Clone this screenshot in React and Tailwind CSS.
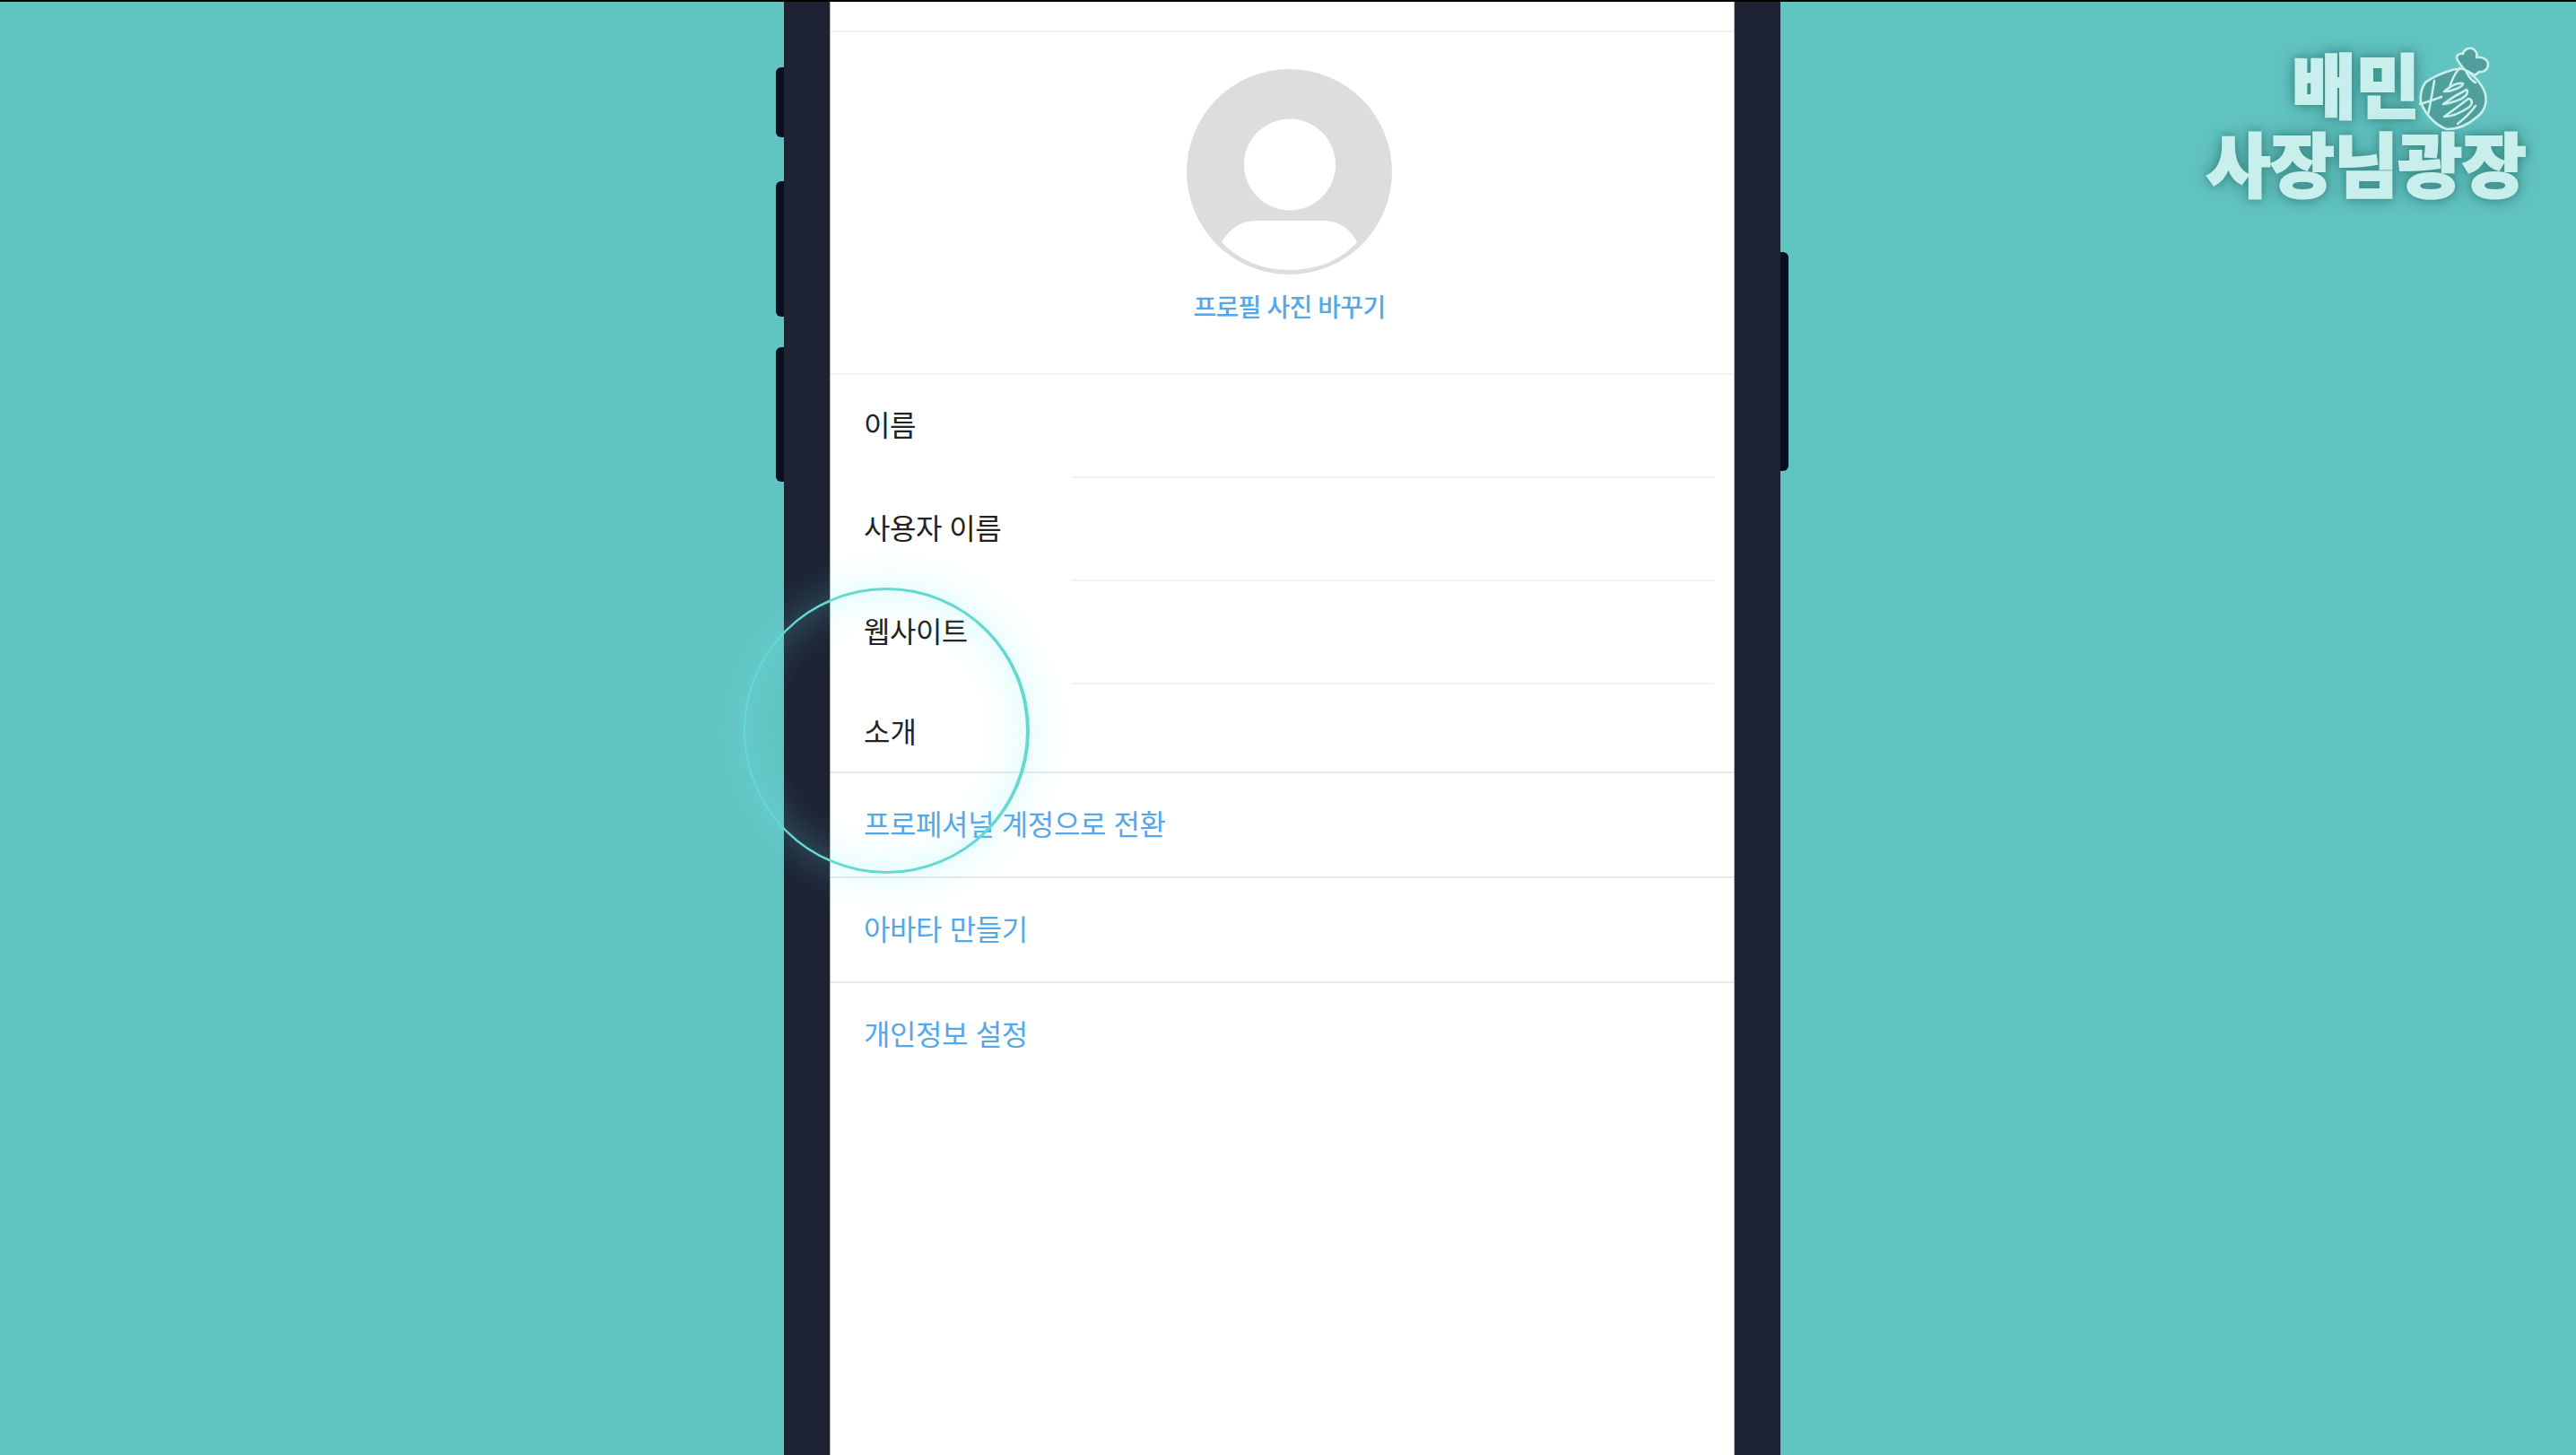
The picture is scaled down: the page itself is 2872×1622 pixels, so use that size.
import React from 'react';

const KR = "font-['Inter','Noto_Sans_CJK_KR',sans-serif]";

// scribbled pouch next to the logo text
const Pouch = () => (
  <svg viewBox="0 0 100 110" className="w-[100px] h-[110px]" fill="none" stroke="#c8efec" strokeWidth="2.6" strokeLinecap="round" strokeLinejoin="round">
    <path d="M14 52 C22 46 34 41 44 38 C50 37 54 36 57 37 C66 42 76 52 80 62 C84 74 80 84 72 90 C62 99 50 104 38 104 C26 100 14 88 9 74 C8 66 10 58 14 52 Z" fill="#4f9f9c" />
    <path d="M57 37 C55 34 52 31 50 27 C47 22 52 19 56 20 C57 15 63 12 68 15 C72 18 72 21 71 24 C77 23 84 26 84 32 C84 38 78 41 74 40 C72 42 70 43 69 44 C66 42 62 40 57 37 Z" fill="#4f9f9c" />
    <path d="M52 36 C47 42 43 50 41 58 M60 41 C63 46 66 50 70 52" />
    <path d="M24 50 C22 62 20 75 17 88 M8 76 C16 74 24 71 32 68" />
    <path d="M35 62 C42 56 50 52 56 53 C56 57 44 62 35 62 Z" />
    <path d="M34 76 C42 70 52 64 60 60 C64 64 56 70 50 72 C44 74 38 76 34 76 Z" />
    <path d="M35 90 C44 84 54 76 62 70 C66 70 68 76 62 80 C56 84 46 90 35 90 Z" />
    <path d="M50 98 C58 92 64 86 70 78" />
  </svg>
);

const Logo = () => (
  <div className="relative flex flex-col items-center w-[360px] ml-[464px] mt-[46px] text-[#c8efec] font-['Noto_Sans_CJK_KR',sans-serif] font-black text-[78px] leading-[88px] tracking-[-0.5px] [-webkit-text-stroke:2px_#c8efec] [text-shadow:0_0_24px_#3f8f8b,0_0_12px_#3f8f8b,0_0_6px_#3f8f8b]">
    <div className="self-start ml-[97px]">배민</div>
    <div>사장님광장</div>
    <div className="absolute left-[232px] top-[-8px]"><Pouch /></div>
  </div>
);

const Field = ({ label, line = true }) => (
  <div className="relative h-[115px] flex items-center pl-[37px] pb-[2px] text-[32px] text-[#222222] tracking-[-0.5px]">
    {label}
    {line && <div className="absolute bottom-0 left-[268px] right-[22px] h-[2px] bg-[#f3f3f3]" />}
  </div>
);

const LinkRow = ({ label }) => (
  <div className="h-[117px] flex items-center pl-[37px] text-[32px] text-[#55a7e8] tracking-[-0.4px] border-b-2 border-[#e8e8e8] last:border-b-0 last:pb-[2px]">
    {label}
  </div>
);

const Avatar = () => (
  <svg viewBox="0 0 229 229" className="w-[229px] h-[229px]">
    <circle cx="114.5" cy="114.5" r="114.5" fill="#dddddd" />
    <circle cx="115" cy="106.5" r="51" fill="#ffffff" />
    <path d="M39 193 C48 178 60 169 78 169 L152 169 C170 169 182 178 190 193 C172 213 146 224 114.5 224 C84 224 58 213 39 193 Z" fill="#ffffff" />
  </svg>
);

const App = () => (
  <div className={`w-[2872px] h-[1622px] overflow-hidden bg-[#62c4c2] border-t-2 border-black flex ${KR}`}>
    <div className="w-[865px]" />
    <div className="w-[9px] flex flex-col pt-[73px]">
      <div className="h-[78px] rounded-l-[6px] bg-[#0a0f1f]" />
      <div className="h-[151px] mt-[49px] rounded-l-[6px] bg-[#0a0f1f]" />
      <div className="h-[150px] mt-[34px] rounded-l-[6px] bg-[#0a0f1f]" />
    </div>
    <div className="w-[1111px] h-full bg-[#1d2333] px-[51px] relative">
      <div className="h-full bg-white flex flex-col border-x border-[#a9adb3]">
        <div className="h-[34px] border-b-2 border-[#f1f1f1]" />
        <div className="h-[382px] border-b-2 border-[#f1f1f1] flex flex-col items-center">
          <div className="mt-[41px] ml-[16px]"><Avatar /></div>
          <div className="mt-[16px] ml-[16px] text-[28px] font-medium text-[#55a7e8] tracking-[-0.7px]">프로필 사진 바꾸기</div>
        </div>
        <Field label="이름" />
        <Field label="사용자 이름" />
        <Field label="웹사이트" />
        <div className="h-[97px] flex items-center pl-[37px] pt-[10px] text-[32px] text-[#222222]">소개</div>
        <div className="border-t-2 border-[#e8e8e8]">
          <LinkRow label="프로페셔널 계정으로 전환" />
          <LinkRow label="아바타 만들기" />
          <LinkRow label="개인정보 설정" />
        </div>
      </div>
      <div className="absolute left-[-45px] top-[653px] w-[319px] h-[319px] rounded-full border-y-[3px] border-l-[2px] border-r-[4px] border-[#66d8d2] shadow-[0_0_50px_rgba(110,240,240,0.28),inset_0_0_50px_rgba(110,240,240,0.28)]" />
    </div>
    <div className="w-[9px] pt-[279px]">
      <div className="h-[244px] rounded-r-[6px] bg-[#0a0f1f]" />
    </div>
    <div className="flex-1 min-w-0">
      <Logo />
    </div>
  </div>
);

export default App;
